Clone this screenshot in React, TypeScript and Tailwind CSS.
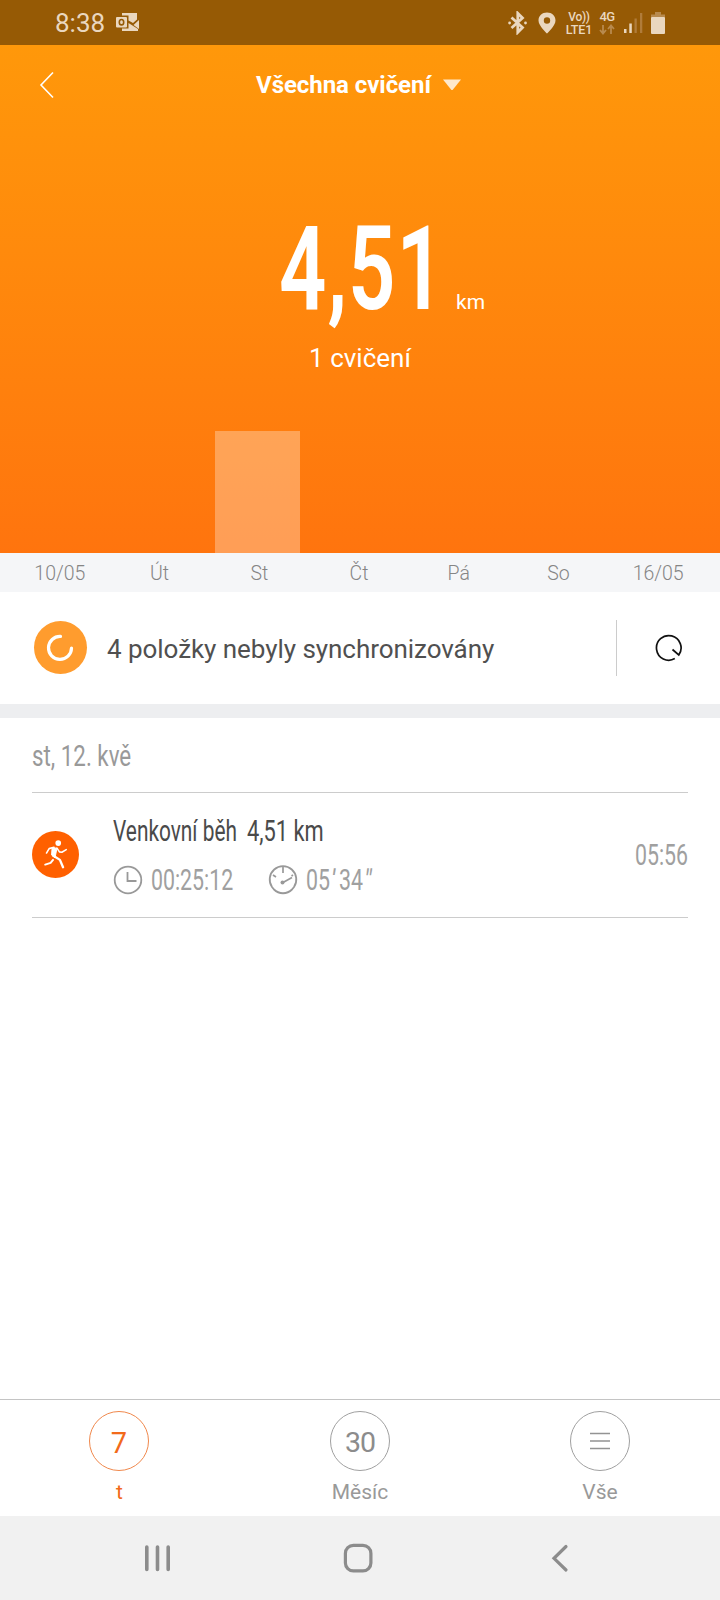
import clsx from "clsx";
import React from "react";

const days = [
  { label: "10/05", value: 0 },
  { label: "Út", value: 0 },
  { label: "St", value: 122 },
  { label: "Čt", value: 0 },
  { label: "Pá", value: 0 },
  { label: "So", value: 0 },
  { label: "16/05", value: 0 },
];

interface INarrowPropType {
  children: React.ReactNode;
  className?: string;
}

// condensed text, the caller sets the horizontal scale and the box width
function Narrow(props: INarrowPropType) {
  const { children, className } = props;
  return (
    <span className={clsx("block whitespace-pre origin-left", className)}>
      {children}
    </span>
  );
}

function StatusBar() {
  return (
    <div className="h-[45px] bg-[#965a05] flex items-center text-[#ead7bf]">
      <span className="ml-[55px] text-[26px] leading-[45px] w-[61px] pt-px">
        8:38
      </span>
      <svg width="23" height="18" viewBox="0 0 23 18" className="-mt-px">
        <path
          d="M6 0H21V6.5L17 10L12.500 7.500V2.500H6ZM23 7V16L17.500 12ZM6 15.500H12.500V10L22 16V18H6Z"
          fill="currentColor"
        />
        <rect x="0" y="4" width="11" height="10.500" rx="1" fill="currentColor" />
        <ellipse cx="5.500" cy="9.200" rx="2.200" ry="2.700" fill="none" stroke="#965a05" strokeWidth="1.600" />
      </svg>
      <svg width="20" height="24" viewBox="0 0 20 24" className="ml-[369px]">
        <path
          d="M3.500 6.500L14.500 16.500L9.800 21.300V2.300L14.500 7L3.500 17"
          fill="none"
          stroke="currentColor"
          strokeWidth="2.800"
        />
        <circle cx="1.600" cy="12" r="1.400" fill="currentColor" />
        <circle cx="17.500" cy="12" r="1.400" fill="currentColor" />
      </svg>
      <svg width="18" height="22" viewBox="0 0 18 22" className="ml-[10px]">
        <path
          fillRule="evenodd"
          d="M9 0.500C4 0.500 0.500 4 0.500 8.500C0.500 14 9 21.500 9 21.500S17.500 14 17.500 8.500C17.500 4 14 0.500 9 0.500ZM9 5.300A3.200 3.200 0 1 1 9 11.700A3.200 3.200 0 1 1 9 5.300Z"
          fill="currentColor"
        />
      </svg>
      <div className="ml-[9px] mt-px w-[28px] text-center font-medium leading-[12px]">
        <div className="text-[12px] leading-[13px] tracking-[-0.3px]">Vo))</div>
        <div className="text-[12.500px] tracking-[-0.1px]">LTE1</div>
      </div>
      <div className="ml-[5px] mt-px w-[18px] flex flex-col items-center font-medium text-[13px] leading-[12px]">
        <span className="tracking-[-0.6px]">4G</span>
        <svg width="16" height="11" viewBox="0 0 16 11" className="mt-px">
          <path
            d="M4 1V9M1 6L4 9.500L7 6M12 10V2M9 5L12 1.500L15 5"
            fill="none"
            stroke="#b88a4e"
            strokeWidth="1.800"
          />
        </svg>
      </div>
      <svg width="19" height="20" viewBox="0 0 19 20" className="ml-[8px] mt-px">
        <rect x="0" y="16" width="2.500" height="4" fill="currentColor" />
        <rect x="5.300" y="10.500" width="2.500" height="9.500" fill="currentColor" />
        <rect x="10.500" y="5.500" width="2.300" height="14.500" fill="#b07c3a" />
        <rect x="16" y="0" width="2.300" height="20" fill="#b07c3a" />
      </svg>
      <svg width="14" height="22" viewBox="0 0 14 22" className="ml-[8px]">
        <rect x="4" y="0" width="6" height="3" fill="#b88a4e" />
        <rect x="0" y="2.500" width="14" height="3" fill="#b88a4e" />
        <rect x="0" y="5" width="14" height="17" rx="1" fill="currentColor" />
      </svg>
    </div>
  );
}

function Summary() {
  return (
    <div className="h-[508px] bg-gradient-to-b from-[#ff980a] to-[#ff740e] text-white flex flex-col">
      <div className="h-[79px] flex items-center">
        <svg width="16" height="28" viewBox="0 0 16 28" className="ml-[39px]">
          <path d="M14 1.500L2 14L14 26.500" fill="none" stroke="currentColor" strokeWidth="1.600" />
        </svg>
        <span className="ml-[201px] w-[187px] text-[24px] font-bold tracking-[-0.05px] pt-px">
          Všechna cvičení
        </span>
        <svg width="18" height="12" viewBox="0 0 18 12">
          <path d="M0 0.500H18L10 10.500Q9 11.500 8 10.500Z" fill="#ffe9cc" />
        </svg>
      </div>
      <div className="mt-[80px] h-[130px] flex items-end pl-[279px]">
        <Narrow className="w-[177px] text-[117px] leading-[130px] font-semibold tracking-[1.500px] scale-x-[0.71]">
          4,51
        </Narrow>
        <span className="text-[21px] leading-[24px] mb-[20px]">km</span>
      </div>
      <div className="mt-[6px] text-center text-[26px] leading-[36px]">
        1 cvičení
      </div>
      <div className="grow flex items-end px-[10px]">
        {days.map((day) => (
          <div key={day.label} className="w-[100px] pl-[5.400px]">
            <div className="w-[84.500px] bg-white/30" style={{ height: day.value }} />
          </div>
        ))}
      </div>
    </div>
  );
}

function Axis() {
  return (
    <div className="h-[39px] bg-[#f5f6f8] flex items-center pl-[10px] pr-[12px] pt-[2px]">
      {days.map((day) => (
        <span
          key={day.label}
          className="flex-1 text-center text-[19.500px] font-light text-[#858585]"
        >
          {day.label}
        </span>
      ))}
    </div>
  );
}

function SyncRow() {
  return (
    <div className="h-[112px] flex items-center">
      <div className="ml-[33.500px] -mt-px size-[53px] rounded-full bg-[#ff9c2e] flex items-center justify-center">
        <svg width="30" height="30" viewBox="0 0 30 30">
          <path
            d="M15.500 3.400A11.500 11.500 0 1 0 26.500 15"
            fill="none"
            stroke="#fff"
            strokeWidth="3.200"
            strokeLinecap="round"
          />
        </svg>
      </div>
      <span className="ml-[20.500px] w-[509px] pt-[2px] text-[26px] tracking-[-0.05px] text-[#505050]">
        4 položky nebyly synchronizovány
      </span>
      <div className="w-px h-[56px] bg-[#cccccc]" />
      <svg width="30" height="30" viewBox="0 0 30 30" className="ml-[36px] mt-[2px]">
        <path
          d="M21.800 24.600A12.300 12.300 0 1 1 25.800 21L19.500 15.500"
          fill="none"
          stroke="#111"
          strokeWidth="1.700"
        />
      </svg>
    </div>
  );
}

function RunIcon() {
  return (
    <svg width="47" height="47" viewBox="0 0 48 48" className="-mt-px">
      <circle cx="24" cy="24" r="24" fill="#ff6000" />
      <circle cx="26.800" cy="12.300" r="2.900" fill="#fff" />
      <path d="M20.500 17.200L25.500 17.500L23.500 27.500L20 24.500Z" fill="#fff" stroke="#fff" strokeLinejoin="round" />
      <g fill="none" stroke="#fff" strokeLinecap="round" strokeLinejoin="round">
        <path d="M22.500 16.700L17.500 18L14.800 22.500" strokeWidth="1.600" />
        <path d="M25.500 17.500L28 21.300L30.500 21.700L35 19" strokeWidth="1.600" />
        <path d="M21.500 25L28.500 29.500L31.700 37" strokeWidth="2.400" />
        <path d="M21.500 29.500L19 32.500L13.500 34.300" strokeWidth="2" />
      </g>
    </svg>
  );
}

function Exercise() {
  return (
    <div className="mx-[32px] h-[126px] border-y border-[#cccccc] flex items-center">
      <RunIcon />
      <div className="ml-[34px] w-[522px] flex flex-col">
        <div className="h-[40px] flex items-center text-[29.500px] text-[#4a4a4a]">
          <Narrow className="w-[134px] scale-x-[0.707]">Venkovní běh</Narrow>
          <Narrow className="scale-x-[0.74]">4,51 km</Narrow>
        </div>
        <div className="mt-[8px] h-[40px] flex items-center text-[29px] text-[#a0a0a0]">
          <svg width="30" height="30" viewBox="0 0 30 30" className="mt-px">
            <circle cx="15" cy="15" r="13.300" fill="none" stroke="#999" strokeWidth="1.800" />
            <path d="M14.500 7V16H23.500" fill="none" stroke="#999" strokeWidth="1.800" />
          </svg>
          <Narrow className="ml-[8px] mt-[3px] w-[117px] scale-x-[0.735]">00:25:12</Narrow>
          <svg width="30" height="30" viewBox="0 0 30 30" className="mt-px">
            <path
              d="M6 24.500L4 22A13.300 13.300 0 1 1 26 22L24 24.500C19 29.500 11 29.500 6 24.500Z"
              fill="none"
              stroke="#999"
              strokeWidth="1.800"
            />
            <path d="M15 2V8M5 10L8 12M25 10L23.500 11M15 17.500L24 12.500" fill="none" stroke="#999" strokeWidth="1.700" />
            <circle cx="14.500" cy="17.500" r="2" fill="#999" />
          </svg>
          <Narrow className="ml-[8px] mt-[3px] scale-x-[0.735]">05</Narrow>
          <Narrow className="-ml-[8px] w-[8px] mt-[3px] skew-x-[-8deg] scale-x-[0.9]">'</Narrow>
          <Narrow className="w-[25px] mt-[3px] scale-x-[0.735]">34</Narrow>
          <Narrow className="mt-[3px] skew-x-[-8deg] scale-x-[0.85]">"</Narrow>
        </div>
      </div>
      <Narrow className="-mt-[2px] w-[52px] text-[30px] text-[#a0a0a0] scale-x-[0.71]">
        05:56
      </Narrow>
    </div>
  );
}

function Tabs() {
  return (
    <div className="h-[117px] border-t border-[#c4c4c4] grid grid-cols-3 text-[21px] leading-[26px] text-[#999999]">
      <div className="flex flex-col items-center pt-[11px] text-[#f26a1b]">
        <div className="size-[60px] -ml-[2px] rounded-full border border-[#f0884c] flex items-center justify-center text-[29px] pt-[4px]">
          7
        </div>
        <span className="mt-[8px] -ml-px">t</span>
      </div>
      <div className="flex flex-col items-center pt-[11px]">
        <div className="size-[60px] rounded-full border border-[#a0a0a0] flex items-center justify-center text-[28.500px] tracking-[-1px] text-[#8c8c8c] pt-[4px]">
          30
        </div>
        <span className="mt-[8px]">Měsíc</span>
      </div>
      <div className="flex flex-col items-center pt-[11px]">
        <div className="size-[60px] rounded-full border border-[#a0a0a0] flex items-center justify-center">
          <svg width="20" height="18" viewBox="0 0 20 18">
            <path d="M0 1.500H20M0 9H20M0 16.500H20" stroke="#939393" strokeWidth="1.500" />
          </svg>
        </div>
        <span className="mt-[8px]">Vše</span>
      </div>
    </div>
  );
}

function NavBar() {
  return (
    <div className="h-[84px] bg-[#f1f1f1] flex items-center text-[#8c8c8c]">
      <svg width="28" height="30" viewBox="0 0 28 30" className="ml-[144px]">
        <path d="M2.800 4V26.500M13.500 4V26.500M24.200 4V26.500" stroke="currentColor" strokeWidth="3.600" strokeLinecap="round" />
      </svg>
      <svg width="30" height="30" viewBox="0 0 30 30" className="ml-[171px]">
        <rect x="2.400" y="2.400" width="25.500" height="25.500" rx="8" fill="none" stroke="currentColor" strokeWidth="3.200" />
      </svg>
      <svg width="18" height="30" viewBox="0 0 18 30" className="ml-[178px]">
        <path d="M15 3.500L3 15.300L15 27" fill="none" stroke="currentColor" strokeWidth="3.200" strokeLinecap="round" />
      </svg>
    </div>
  );
}

export default function App() {
  return (
    <div className="w-[720px] h-[1600px] bg-white flex flex-col overflow-hidden font-['Roboto','Noto_Sans',sans-serif]">
      <StatusBar />
      <Summary />
      <Axis />
      <SyncRow />
      <div className="h-[14px] bg-[#edeef0]" />
      <div className="h-[74px] pl-[32px] flex items-center text-[30px] text-[#999999]">
        <Narrow className="scale-x-[0.745]">st, 12. kvě</Narrow>
      </div>
      <Exercise />
      <div className="grow" />
      <Tabs />
      <NavBar />
    </div>
  );
}
